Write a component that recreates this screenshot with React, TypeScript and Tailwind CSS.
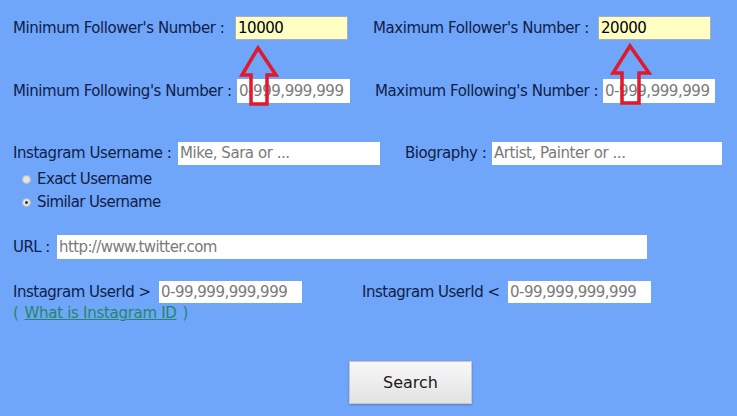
import React from "react";

const font = { fontFamily: "'DejaVu Sans', Verdana, sans-serif" };

function Field({ w, h = 24, value, placeholder, yellow }: { w: number; h?: number; value?: string; placeholder?: string; yellow?: boolean }) {
  return (
    <div
      className={
        "flex items-center pl-[2px] overflow-hidden whitespace-nowrap shrink-0 " +
        (yellow ? "bg-[#ffffc4] border border-[#a7adbb] text-black" : "bg-white text-[#7a7a7a]")
      }
      style={{ width: w, height: h }}
    >
      {value ?? placeholder}
    </div>
  );
}

function Radio({ checked, label }: { checked?: boolean; label: string }) {
  return (
    <div className="flex items-center h-[23px] pl-[9px]">
      <span className="w-[9px] h-[9px] rounded-full bg-[#e4e4e4] border border-[#b9b9b9] flex items-center justify-center mr-[6px]">
        {checked && <span className="w-[3px] h-[3px] rounded-full bg-[#333]" />}
      </span>
      <span className="tracking-[-0.6px]">{label}</span>
    </div>
  );
}

export default function App() {
  return (
    <div
      className="relative w-[737px] h-[416px] bg-[#6fa6f9] text-[#102048] text-[15px] tracking-[-0.45px] pl-[13px] pt-[16px] overflow-hidden"
      style={font}
    >
      {/* Row 1 */}
      <div className="flex items-center h-[24px]">
        <div className="w-[222px] shrink-0 whitespace-nowrap">Minimum Follower's Number :</div>
        <Field w={113} value="10000" yellow />
        <div className="w-[225px] ml-[25px] shrink-0 whitespace-nowrap">Maximum Follower's Number :</div>
        <Field w={113} value="20000" yellow />
      </div>

      {/* Row 2 */}
      <div className="flex items-center h-[24px] mt-[39px]">
        <div className="w-[224px] shrink-0 whitespace-nowrap">Minimum Following's Number :</div>
        <Field w={113} placeholder="0-999,999,999" />
        <div className="w-[228px] ml-[25px] shrink-0 whitespace-nowrap">Maximum Following's Number :</div>
        <Field w={112} placeholder="0-999,999,999" />
      </div>

      {/* Row 3 */}
      <div className="flex items-center h-[23px] mt-[39px]">
        <div className="w-[165px] shrink-0 whitespace-nowrap">Instagram Username :</div>
        <Field w={202} h={23} placeholder="Mike, Sara or ..." />
        <div className="w-[87px] ml-[25px] shrink-0 whitespace-nowrap">Biography :</div>
        <Field w={230} h={23} placeholder="Artist, Painter or ..." />
      </div>

      {/* Radios */}
      <div className="mt-[3px] flex flex-col">
        <Radio label="Exact Username" />
        <Radio label="Similar Username" checked />
      </div>

      {/* URL */}
      <div className="flex items-center h-[24px] mt-[21px] tracking-[-0.6px]">
        <div className="w-[44px] shrink-0 whitespace-nowrap">URL :</div>
        <Field w={590} placeholder="http://www.twitter.com" />
      </div>

      {/* UserId */}
      <div className="flex items-center h-[22px] mt-[22px] tracking-[-0.5px]">
        <div className="w-[146px] shrink-0 whitespace-nowrap">Instagram UserId &gt;</div>
        <Field w={143} h={22} placeholder="0-99,999,999,999" />
        <div className="w-[146px] ml-[60px] shrink-0 whitespace-nowrap">Instagram UserId &lt;</div>
        <Field w={143} h={22} placeholder="0-99,999,999,999" />
      </div>

      <div className="h-[21px] flex items-center tracking-[-0.3px] text-[#23876a]">
        <span>(</span>
        <a className="underline ml-[6px] mr-[6px] text-[#23876a]">What is Instagram ID</a>
        <span>)</span>
      </div>

      {/* Search */}
      <div className="flex mt-[37px]">
        <button
          className="ml-[336px] w-[123px] h-[43px] border border-[#c8c8c8] bg-gradient-to-b from-[#f8f8f8] to-[#e2e2e2] text-[#1a1a1a] text-[16px] shadow-[0_1px_2px_rgba(0,0,0,0.25)] tracking-normal"
          style={font}
        >
          Search
        </button>
      </div>

      {/* Red arrows */}
      <svg className="absolute left-0 top-0 pointer-events-none" width="737" height="416">
        <path
          d="M258,48 L276,75 L267,75 L267,104 L251,104 L251,75 L242,75 Z"
          fill="none"
          stroke="#e0192b"
          strokeWidth="3.5"
          strokeLinejoin="miter"
        />
        <path
          d="M630,46 L649,73 L639,73 L639,103 L622,103 L622,73 L613,73 Z"
          fill="none"
          stroke="#e0192b"
          strokeWidth="3.5"
          strokeLinejoin="miter"
        />
      </svg>
    </div>
  );
}
